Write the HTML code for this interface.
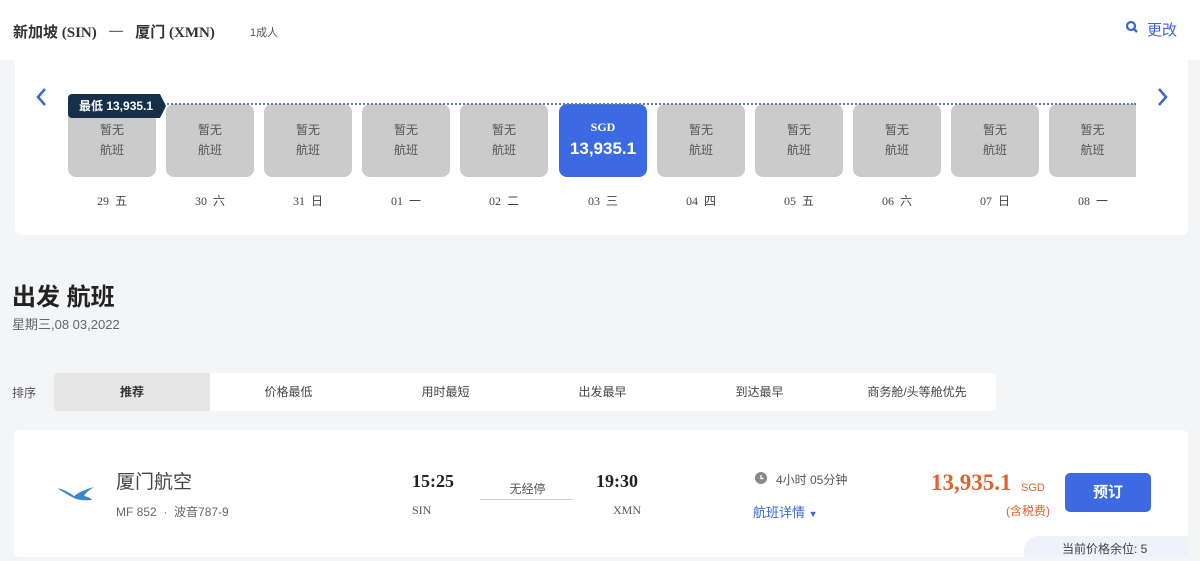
<!DOCTYPE html>
<html><head><meta charset="utf-8"><style>
*{margin:0;padding:0;box-sizing:border-box}
body{width:1200px;height:561px;overflow:hidden;background:#f4f5f7;font-family:"Liberation Sans","Noto Sans CJK SC",sans-serif;position:relative;color:#333}
.a{position:absolute}
.top{left:0;top:0;width:1200px;height:60px;background:#fff}
.panel{left:15px;top:60px;width:1173px;height:175px;background:#fff;border-radius:0 0 6px 6px}
.cell{position:absolute;top:104px;width:88px;height:73px;background:#cbcbcb;border-radius:8px;color:#555;font-size:12px;text-align:center;line-height:20px;padding-top:16px}
.day{position:absolute;top:192px;width:88px;text-align:center;font-size:12px;color:#444;font-family:"Liberation Serif","Noto Sans CJK SC",serif}
.tab{position:absolute;top:373px;height:38px;line-height:38px;font-size:12px;text-align:center;color:#444}
</style></head><body>
<div class="a top"></div>
<div class="a" style="left:13px;top:21px;font-size:15px;font-weight:bold;color:#333;font-family:'Liberation Serif','Noto Sans CJK SC',serif">新加坡 (SIN) <span style="font-weight:normal;margin:0 8px;color:#666">一</span> 厦门 (XMN)</div>
<div class="a" style="left:250px;top:24px;font-size:11px;color:#555">1成人</div>
<svg class="a" style="left:1125px;top:20px" width="14" height="14" viewBox="0 0 14 14"><circle cx="6" cy="6" r="4" stroke="#3a66d6" stroke-width="2.2" fill="none"/><path d="M9 9L12 12" stroke="#3a66d6" stroke-width="2.4"/></svg>
<div class="a" style="left:1147px;top:19px;font-size:15px;color:#3a66d6">更改</div>
<div class="a panel"></div>
<svg class="a" style="left:34px;top:87px" width="14" height="20" viewBox="0 0 14 20"><path d="M11 2L4 10L11 18" stroke="#3a66d6" stroke-width="2.5" fill="none"/></svg>
<svg class="a" style="left:1156px;top:87px" width="14" height="20" viewBox="0 0 14 20"><path d="M3 2L10 10L3 18" stroke="#3a66d6" stroke-width="2.5" fill="none"/></svg>
<div class="cell" style="left:68px">暂无<br>航班</div>
<div class="cell" style="left:166px">暂无<br>航班</div>
<div class="cell" style="left:264px">暂无<br>航班</div>
<div class="cell" style="left:362px">暂无<br>航班</div>
<div class="cell" style="left:460px">暂无<br>航班</div>
<div class="cell" style="left:559px;background:#3b6ae3;color:#fff;padding-top:13px"><div style="font-size:12px;font-weight:bold;font-family:'Liberation Serif',serif">SGD</div><div style="font-size:17px;font-weight:bold;margin-top:2px">13,935.1</div></div>
<div class="cell" style="left:657px">暂无<br>航班</div>
<div class="cell" style="left:755px">暂无<br>航班</div>
<div class="cell" style="left:853px">暂无<br>航班</div>
<div class="cell" style="left:951px">暂无<br>航班</div>
<div class="cell" style="left:1049px;width:87px;border-radius:8px 0 0 8px">暂无<br>航班</div>
<div class="a" style="left:160px;top:103px;width:976px;border-top:2px dotted #6a7aa0"></div>
<div class="a" style="left:68px;top:94px;width:92px;height:24px;background:#14304a;border-radius:4px 0 0 4px;color:#fff;font-size:12px;font-weight:bold;line-height:24px;padding-left:11px">最低 13,935.1</div>
<svg class="a" style="left:160px;top:94px" width="6" height="24"><path d="M0 0L6 12L0 24Z" fill="#14304a"/></svg>
<div class="day" style="left:68px">29&nbsp; 五</div>
<div class="day" style="left:166px">30&nbsp; 六</div>
<div class="day" style="left:264px">31&nbsp; 日</div>
<div class="day" style="left:362px">01&nbsp; 一</div>
<div class="day" style="left:460px">02&nbsp; 二</div>
<div class="day" style="left:559px">03&nbsp; 三</div>
<div class="day" style="left:657px">04&nbsp; 四</div>
<div class="day" style="left:755px">05&nbsp; 五</div>
<div class="day" style="left:853px">06&nbsp; 六</div>
<div class="day" style="left:951px">07&nbsp; 日</div>
<div class="day" style="left:1049px">08&nbsp; 一</div>
<div class="a" style="left:12px;top:277px;font-size:24px;font-weight:bold;color:#222">出发 航班</div>
<div class="a" style="left:12px;top:314px;font-size:13px;color:#666">星期三,08 03,2022</div>
<div class="a" style="left:12px;top:384px;font-size:12px;color:#555">排序</div>
<div class="a" style="left:54px;top:373px;width:942px;height:38px;background:#fff;border-radius:4px"></div>
<div class="tab" style="left:54px;width:156px;background:#e6e6e6;border-radius:4px 0 0 4px;font-weight:bold;color:#333">推荐</div>
<div class="tab" style="left:210px;width:157px">价格最低</div>
<div class="tab" style="left:367px;width:157px">用时最短</div>
<div class="tab" style="left:524px;width:157px">出发最早</div>
<div class="tab" style="left:681px;width:157px">到达最早</div>
<div class="tab" style="left:838px;width:158px">商务舱/头等舱优先</div>
<div class="a" style="left:14px;top:430px;width:1174px;height:127px;background:#fff;border-radius:6px"></div>
<svg class="a" style="left:56px;top:484px" width="40" height="20" viewBox="0 0 40 20"><path d="M1 4Q10 6 18 12Q26 6 38 3Q30 8 28 12Q34 13 36 16Q24 17 18 14Q10 10 1 4Z" fill="#3a86c8"/></svg>
<div class="a" style="left:116px;top:467px;font-size:19px;color:#444">厦门航空</div>
<div class="a" style="left:116px;top:503px;font-size:12px;color:#666">MF 852 &nbsp;·&nbsp; 波音787-9</div>
<div class="a" style="left:412px;top:471px;font-size:18px;font-weight:bold;color:#222;font-family:'Liberation Serif',serif">15:25</div>
<div class="a" style="left:412px;top:503px;font-size:12px;color:#555;font-family:'Liberation Serif',serif">SIN</div>
<div class="a" style="left:482px;top:480px;width:91px;text-align:center;font-size:12px;color:#555">无经停</div>
<div class="a" style="left:480px;top:499px;width:93px;border-top:1px solid #ccc"></div>
<div class="a" style="left:596px;top:471px;font-size:18px;font-weight:bold;color:#222;font-family:'Liberation Serif',serif">19:30</div>
<div class="a" style="left:613px;top:503px;font-size:12px;color:#555;font-family:'Liberation Serif',serif">XMN</div>
<svg class="a" style="left:755px;top:472px" width="12" height="12" viewBox="0 0 12 12"><circle cx="6" cy="6" r="6" fill="#888"/><path d="M6 3V6.5H8.5" stroke="#fff" stroke-width="1.3" fill="none"/></svg>
<div class="a" style="left:776px;top:471px;font-size:12px;color:#555">4小时 05分钟</div>
<div class="a" style="left:753px;top:502px;font-size:13px;color:#3a66d6">航班详情 <span style="font-size:9px">▼</span></div>
<div class="a" style="left:931px;top:470px;font-size:23px;font-weight:bold;color:#e0622e;font-family:'Liberation Serif',serif">13,935.1</div>
<div class="a" style="left:1021px;top:482px;font-size:11px;color:#e0622e">SGD</div>
<div class="a" style="left:1006px;top:502px;font-size:12px;color:#e0622e">(含税费)</div>
<div class="a" style="left:1065px;top:473px;width:86px;height:39px;background:#3b6ae3;border-radius:5px;color:#fff;font-size:15px;font-weight:bold;text-align:center;line-height:39px">预订</div>
<div class="a" style="left:1024px;top:536px;width:164px;height:21px;background:#eef2fa;border-radius:14px 0 0 0"></div>
<div class="a" style="left:1062px;top:540px;font-size:12px;color:#444">当前价格余位: 5</div>
</body></html>
